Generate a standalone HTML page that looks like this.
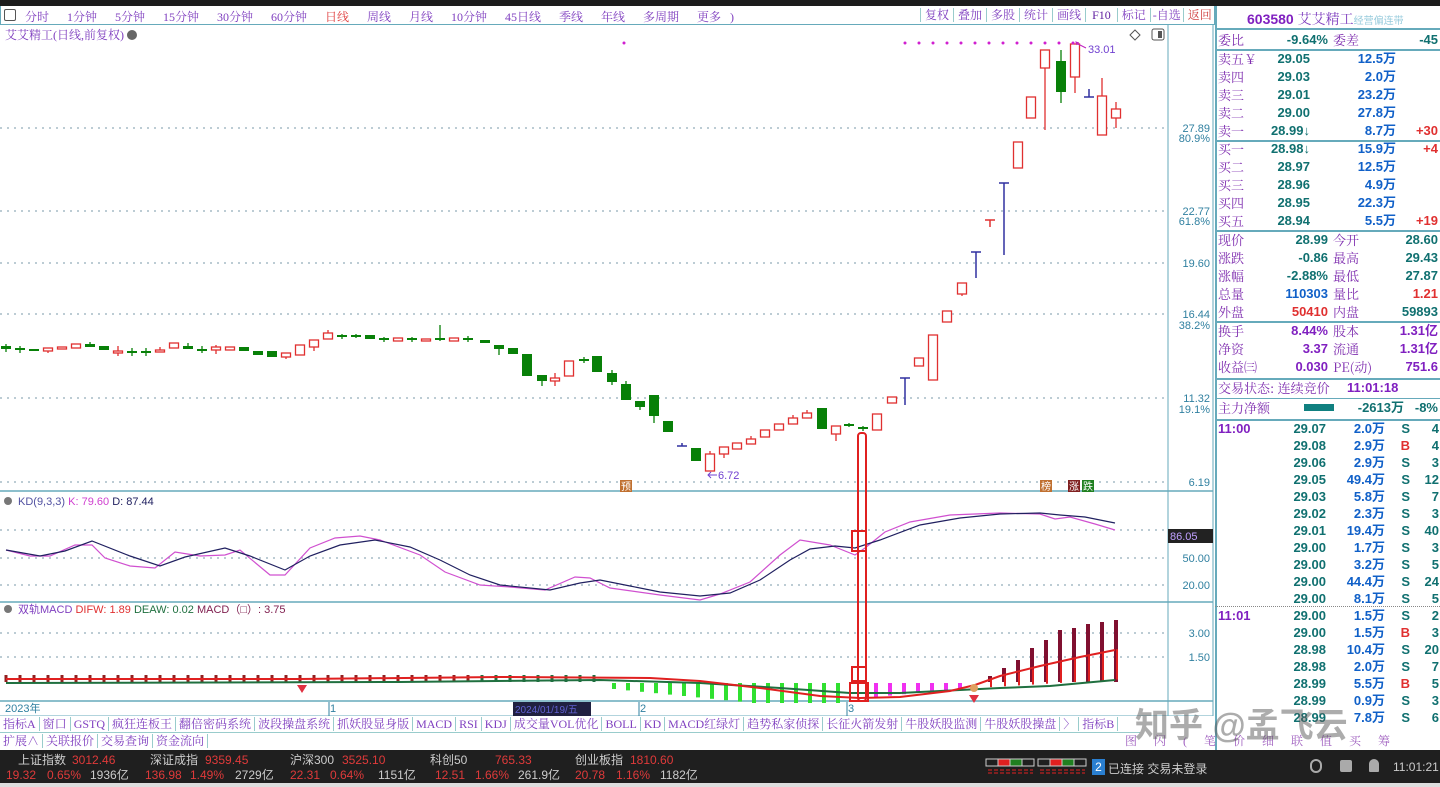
<!DOCTYPE html>
<html><head><meta charset="utf-8">
<style>
*{margin:0;padding:0;box-sizing:border-box}
body{width:1440px;height:787px;overflow:hidden;background:#fff;font-family:"Liberation Sans","Noto Sans CJK SC",sans-serif;position:relative}
.a{position:absolute;white-space:nowrap}
.serif{font-family:"Liberation Serif","Noto Serif CJK SC",serif}
.row span{line-height:18px;top:0}
.lb{color:#8030b0;font-weight:normal;font-family:"Noto Serif CJK SC",serif;font-size:13px}
.tl{color:#107070}
.bl{color:#1060c8}
.rd{color:#e03030}
.pu{color:#8020c0}
</style></head><body>
<div class="a" style="left:0;top:0;width:1440px;height:6px;background:#1c1c1c"></div>
<div class="a" style="left:0;top:6px;width:1215px;height:19px;border:1px solid #6ab;border-top:none;background:#fff"></div>
<div class="a" style="left:4px;top:9px;width:12px;height:12px;border:1px solid #555;border-radius:2px"></div>
<div class="a serif" style="left:25px;top:8px;font-size:12px;color:#8040c0;word-spacing:6px">分时 &nbsp;1分钟 &nbsp;5分钟 &nbsp;15分钟 &nbsp;30分钟 &nbsp;60分钟 &nbsp;<span style="color:#e04040">日线</span> &nbsp;周线 &nbsp;月线 &nbsp;10分钟 &nbsp;45日线 &nbsp;季线 &nbsp;年线 &nbsp;多周期 &nbsp;更多 )</div>
<div class="a serif" style="left:920px;top:6px;height:19px;font-size:12px;color:#8040c0;line-height:19px">
<span style="border-left:1px solid #9cc;padding:0 4px">复权</span><span style="border-left:1px solid #9cc;padding:0 4px">叠加</span><span style="border-left:1px solid #9cc;padding:0 4px">多股</span><span style="border-left:1px solid #9cc;padding:0 4px">统计</span><span style="border-left:1px solid #9cc;padding:0 4px">画线</span><span style="border-left:1px solid #9cc;padding:0 6px;color:#6020a0">F10</span><span style="border-left:1px solid #9cc;padding:0 4px">标记</span><span style="border-left:1px solid #9cc;padding:0 2px">-自选</span><span style="border-left:1px solid #9cc;padding:0 4px;color:#d04040">返回</span></div>
<div class="a serif" style="left:5px;top:26px;font-size:12px;color:#8040c0">艾艾精工(日线,前复权) <span style="display:inline-block;width:10px;height:10px;border-radius:50%;background:#666;vertical-align:-1px"></span></div>

<svg class="a" style="left:0;top:0" width="1215" height="750">
<line x1="1168" y1="25" x2="1168" y2="716" stroke="#6ab"/>
<line x1="1213" y1="25" x2="1213" y2="716" stroke="#6ab"/>
<line x1="0" y1="491" x2="1213" y2="491" stroke="#6ab" stroke-width="1.5"/>
<line x1="0" y1="602" x2="1213" y2="602" stroke="#6ab" stroke-width="1.5"/>
<line x1="0" y1="701" x2="1213" y2="701" stroke="#6ab" stroke-width="1.5"/>
<line x1="0" y1="716" x2="1213" y2="716" stroke="#6ab"/>
<g stroke="#7a9aa8" stroke-dasharray="2,5" stroke-width="1">
<line x1="0" y1="128" x2="1168" y2="128"/><line x1="0" y1="211" x2="1168" y2="211"/><line x1="0" y1="263" x2="1168" y2="263"/><line x1="0" y1="314" x2="1168" y2="314"/><line x1="0" y1="398" x2="1168" y2="398"/><line x1="0" y1="482" x2="1168" y2="482"/>
<line x1="0" y1="530" x2="1168" y2="530"/><line x1="0" y1="558" x2="1168" y2="558"/><line x1="0" y1="585" x2="1168" y2="585"/>
<line x1="0" y1="633" x2="1168" y2="633"/><line x1="0" y1="657" x2="1168" y2="657"/>
</g>
<g font-size="11" fill="#3080a0" text-anchor="end" font-family="Liberation Sans">
<text x="1210" y="132">27.89</text><text x="1210" y="142">80.9%</text>
<text x="1210" y="215">22.77</text><text x="1210" y="225">61.8%</text>
<text x="1210" y="267">19.60</text>
<text x="1210" y="318">16.44</text><text x="1210" y="329">38.2%</text>
<text x="1210" y="402">11.32</text><text x="1210" y="413">19.1%</text>
<text x="1210" y="486">6.19</text>
<text x="1210" y="562">50.00</text><text x="1210" y="589">20.00</text>
<text x="1210" y="637">3.00</text><text x="1210" y="661">1.50</text>
</g>
<rect x="1168" y="529" width="45" height="14" fill="#222"/>
<text x="1170" y="540" font-size="11" fill="#c0a0ff">86.05</text>
<g id="cd"></g>
<g id="pk"></g>
<polyline fill="none" stroke="#d050d0" stroke-width="1.2" points="6,550 30,556 50,556 75,545 92,545 105,558 130,566 155,568 175,552 200,556 225,555 240,550 270,575 285,575 310,548 335,538 360,536 380,540 420,555 445,572 480,585 510,587 545,590 575,577 590,578 610,588 660,595 700,600 720,594 750,582 780,555 800,540 830,545 855,555 865,548 885,532 910,522 950,515 1000,513 1040,514 1055,519 1070,517 1095,524 1115,530"/>
<polyline fill="none" stroke="#202060" stroke-width="1.2" points="6,550 40,556 65,551 92,541 130,556 160,566 185,557 225,548 250,556 285,570 310,556 340,545 375,540 410,547 440,560 470,575 500,585 550,590 580,583 600,580 630,586 660,592 700,596 730,593 760,580 790,560 810,549 835,546 855,548 880,540 920,525 960,518 1000,514 1040,513 1060,515 1085,517 1115,523"/>
<text x="18" y="505" font-size="11" fill="#5050a0">KD(9,3,3) <tspan fill="#d040d0">K: 79.60</tspan> <tspan fill="#202060">D: 87.44</tspan></text>
<circle cx="8" cy="501" r="4" fill="#777"/>
<circle cx="8" cy="609" r="4" fill="#777"/>
<text x="18" y="613" font-size="11" fill="#8040c0">双轨MACD <tspan fill="#e03030">DIFW: 1.89</tspan> <tspan fill="#207040">DEAW: 0.02</tspan> <tspan fill="#802050">MACD（□）: 3.75</tspan></text>
<g id="mb"></g>
<polyline fill="none" stroke="#207040" stroke-width="2" points="6,683 400,682 600,680 700,683 780,688 850,693 900,693 960,690 1000,688 1050,686 1115,680"/>
<polyline fill="none" stroke="#e02020" stroke-width="2" points="6,679 300,679 500,677 650,678 700,681 760,688 820,696 860,698 900,697 950,691 975,685 1000,676 1040,666 1080,657 1115,650"/>
<rect x="858" y="433" width="8" height="268" rx="3" fill="none" stroke="#e02020" stroke-width="2"/>
<rect x="852" y="531" width="14" height="20" fill="none" stroke="#e02020" stroke-width="2"/>
<rect x="852" y="667" width="14" height="14" fill="none" stroke="#e02020" stroke-width="2"/>
<rect x="850" y="683" width="18" height="18" fill="none" stroke="#e02020" stroke-width="2"/>
<path d="M297 685 h10 l-5 8z" fill="#e03040"/>
<path d="M969 695 h10 l-5 8z" fill="#e03040"/><circle cx="974" cy="688" r="4" fill="#e0a060"/>
<rect x="620" y="480" width="12" height="12" fill="#c07030"/><text x="621" y="490" font-size="10" fill="#fff">预</text>
<rect x="1040" y="480" width="12" height="12" fill="#c07030"/><text x="1041" y="490" font-size="10" fill="#fff">榜</text>
<rect x="1068" y="480" width="12" height="12" fill="#802020"/><text x="1069" y="490" font-size="10" fill="#fff">涨</text>
<rect x="1082" y="480" width="12" height="12" fill="#208020"/><text x="1083" y="490" font-size="10" fill="#fff">跌</text>
<text x="718" y="479" font-size="11" fill="#7040d0">6.72</text><path d="M717 475 h-9 m3 -3 l-3 3 l3 3" stroke="#7040d0" fill="none"/>
<text x="1088" y="53" font-size="11" fill="#7040d0">33.01</text><path d="M1086 48 l-10 -5 m3 0 l-3 -1 l1 3" stroke="#c020c0" fill="none"/>
<path d="M1130 35 l5 -5 l5 5 l-5 5z" fill="none" stroke="#555"/>
<rect x="1152" y="29" width="12" height="11" rx="2" fill="none" stroke="#555"/><rect x="1158" y="31" width="4" height="7" fill="#555"/>
<g font-size="11" fill="#3080a0"><text x="5" y="712">2023年</text><text x="330" y="712">1</text><text x="640" y="712">2</text><text x="848" y="712">3</text></g>
<g stroke="#3080a0"><line x1="329" y1="702" x2="329" y2="716"/><line x1="639" y1="702" x2="639" y2="716"/><line x1="847" y1="702" x2="847" y2="716"/></g>
<rect x="513" y="702" width="78" height="14" fill="#202040"/><text x="515" y="713" font-size="10" fill="#6060d0">2024/01/19/五</text>
</svg>

<div class="a" style="left:0;top:716px;width:1215px;height:34px;background:#fff"></div>
<div class="a serif" style="left:0;top:716px;height:17px;font-size:12px;color:#8040c0;line-height:17px;border-bottom:1px solid #9cc;width:1140px">
<span style="padding:0 3px;border-right:1px solid #9cc">指标A</span><span style="padding:0 3px;border-right:1px solid #9cc">窗口</span><span style="padding:0 3px;border-right:1px solid #9cc">GSTQ</span><span style="padding:0 3px;border-right:1px solid #9cc">疯狂连板王</span><span style="padding:0 3px;border-right:1px solid #9cc">翻倍密码系统</span><span style="padding:0 3px;border-right:1px solid #9cc">波段操盘系统</span><span style="padding:0 3px;border-right:1px solid #9cc">抓妖股显身版</span><span style="padding:0 3px;border-right:1px solid #9cc">MACD</span><span style="padding:0 3px;border-right:1px solid #9cc">RSI</span><span style="padding:0 3px;border-right:1px solid #9cc">KDJ</span><span style="padding:0 3px;border-right:1px solid #9cc">成交量VOL优化</span><span style="padding:0 3px;border-right:1px solid #9cc">BOLL</span><span style="padding:0 3px;border-right:1px solid #9cc">KD</span><span style="padding:0 3px;border-right:1px solid #9cc">MACD红绿灯</span><span style="padding:0 3px;border-right:1px solid #9cc">趋势私家侦探</span><span style="padding:0 3px;border-right:1px solid #9cc">长征火箭发射</span><span style="padding:0 3px;border-right:1px solid #9cc">牛股妖股监测</span><span style="padding:0 3px;border-right:1px solid #9cc">牛股妖股操盘</span><span style="padding:0 3px;border-right:1px solid #9cc">〉</span><span style="padding:0 3px;border-right:1px solid #9cc">指标B</span></div>
<div class="a serif" style="left:0;top:733px;height:17px;font-size:12px;color:#8040c0;line-height:17px">
<span style="padding:0 3px;border-right:1px solid #9cc">扩展∧</span><span style="padding:0 3px;border-right:1px solid #9cc">关联报价</span><span style="padding:0 3px;border-right:1px solid #9cc">交易查询</span><span style="padding:0 3px;border-right:1px solid #9cc">资金流向</span></div>

<div class="a" style="left:1215px;top:6px;width:225px;height:744px;border-left:2px solid #6ab;background:#fff"></div>
<div class="a" style="left:1247px;top:9px;font-size:14px;font-weight:bold;color:#8020c0">603580 <span style="font-weight:normal;font-family:'Noto Serif CJK SC',serif;color:#8040c0">艾艾精工</span><span style="font-size:10px;color:#9cd;font-weight:normal">经营偏连带</span></div>
<div class="a" style="left:1215px;top:28px;width:225px;border-top:2px solid #6ab"></div>
<div class="a" style="left:1215px;top:49px;width:225px;border-top:2px solid #6ab"></div>
<div class="a" style="left:1215px;top:140px;width:225px;border-top:2px solid #6ab"></div>
<div class="a" style="left:1215px;top:230px;width:225px;border-top:2px solid #6ab"></div>
<div class="a" style="left:1215px;top:321px;width:225px;border-top:2px solid #6ab"></div>
<div class="a" style="left:1215px;top:378px;width:225px;border-top:2px solid #6ab"></div>
<div class="a" style="left:1215px;top:398px;width:225px;border-top:1px solid #6ab"></div>
<div class="a" style="left:1215px;top:419px;width:225px;border-top:2px solid #6ab"></div>
<div class="a" style="left:1215px;top:606px;width:225px;border-top:1px dotted #888"></div>
<div class="a" style="left:1304px;top:404px;width:30px;height:7px;background:#108080"></div>

<div class="a" style="left:0;top:750px;width:1440px;height:37px;background:#1f1f1f"></div>
<div class="a" style="left:0;top:783px;width:1440px;height:4px;background:#ddd"></div>
<div class="a" style="top:753px;left:0;width:800px;font-size:12px;color:#ccc;line-height:15px">
<span class="a" style="left:18px">上证指数</span><span class="a" style="left:72px;color:#e03a3a">3012.46</span>
<span class="a" style="left:150px">深证成指</span><span class="a" style="left:205px;color:#e03a3a">9359.45</span>
<span class="a" style="left:290px">沪深300</span><span class="a" style="left:342px;color:#e03a3a">3525.10</span>
<span class="a" style="left:430px">科创50</span><span class="a" style="left:495px;color:#e03a3a">765.33</span>
<span class="a" style="left:575px">创业板指</span><span class="a" style="left:630px;color:#e03a3a">1810.60</span>
</div>
<div class="a" style="top:768px;left:0;width:800px;font-size:12px;color:#ccc;line-height:15px">
<span class="a" style="left:6px;color:#e03a3a">19.32</span><span class="a" style="left:47px;color:#e03a3a">0.65%</span><span class="a" style="left:90px">1936亿</span>
<span class="a" style="left:145px;color:#e03a3a">136.98</span><span class="a" style="left:190px;color:#e03a3a">1.49%</span><span class="a" style="left:235px">2729亿</span>
<span class="a" style="left:290px;color:#e03a3a">22.31</span><span class="a" style="left:330px;color:#e03a3a">0.64%</span><span class="a" style="left:378px">1151亿</span>
<span class="a" style="left:435px;color:#e03a3a">12.51</span><span class="a" style="left:475px;color:#e03a3a">1.66%</span><span class="a" style="left:518px">261.9亿</span>
<span class="a" style="left:575px;color:#e03a3a">20.78</span><span class="a" style="left:616px;color:#e03a3a">1.16%</span><span class="a" style="left:660px">1182亿</span>
</div>
<svg class="a" style="left:985px;top:758px" width="105" height="20">
<g fill="none" stroke="#ccc"><rect x="1" y="1" width="12" height="7"/><rect x="13" y="1" width="12" height="7" fill="#e02020"/><rect x="25" y="1" width="12" height="7" fill="#208020"/><rect x="37" y="1" width="12" height="7"/>
<rect x="53" y="1" width="12" height="7"/><rect x="65" y="1" width="12" height="7" fill="#e02020"/><rect x="77" y="1" width="12" height="7" fill="#208020"/><rect x="89" y="1" width="12" height="7"/></g>
<g stroke="#e02020" stroke-dasharray="4,2"><line x1="3" y1="12" x2="48" y2="12"/><line x1="3" y1="15" x2="48" y2="15"/><line x1="55" y1="12" x2="100" y2="12"/><line x1="55" y1="15" x2="100" y2="15"/></g>
</svg>
<div class="a" style="left:1092px;top:759px;width:13px;height:16px;background:#2a7fd0;color:#fff;font-size:12px;text-align:center;line-height:16px">2</div>
<div class="a" style="left:1108px;top:760px;font-size:12px;color:#ccc">已连接 交易未登录</div>
<div class="a" style="left:1310px;top:759px;width:12px;height:14px;border:2px solid #aaa;border-radius:6px"></div>
<div class="a" style="left:1340px;top:760px;width:12px;height:12px;background:#aaa;border-radius:2px"></div>
<div class="a" style="left:1369px;top:759px;width:10px;height:13px;background:#aaa;border-radius:5px 5px 1px 1px"></div>
<div class="a" style="left:1393px;top:760px;font-size:12px;color:#ccc">11:01:21</div>

<script>
(function(){
var NS="http://www.w3.org/2000/svg";
function el(p,t,a){var e=document.createElementNS(NS,t);for(var k in a)e.setAttribute(k,a[k]);p.appendChild(e);return e;}
var cd=document.getElementById("cd");
var C=[
[6,'d',346,349,344,352],[20,'c',349,349,346,353],[34,'d',349,351],[48,'u',348,351,,353],[62,'u',347,349],[76,'u',344,348],[90,'d',344,347,342],[104,'d',346,350],[118,'u',351,353,346,356],[132,'c',352,352,348,356],[146,'c',352,352,348,356],[160,'u',350,352,347],[174,'u',343,348],[188,'d',346,349,343],[202,'c',350,350,346,353],[216,'u',347,350,345,354],[230,'u',347,350],[244,'d',347,351],[258,'d',351,355],[272,'d',351,357],[286,'u',353,357,,359],[300,'u',345,355],[314,'u',340,347,,351],[328,'u',333,339,330],[342,'c',336,336,334,339],[356,'c',336,336,334,338],[370,'d',335,339],[384,'c',339,339,337,342],[398,'u',338,341],[412,'c',339,339,337,342],[426,'u',339,341],[440,'c',339,339,325,341],[454,'u',338,341],[468,'c',339,339,336,342],
[485,'d',340,343],[499,'d',345,349,,355],[513,'d',348,354],[527,'d',354,376],[542,'d',375,381,,386],[555,'u',378,381,373,386],[569,'u',361,376],[584,'c',360,360,357,363],[597,'d',356,372],[612,'d',373,382,370,385],[626,'d',384,400,381],[640,'d',401,407,,410],[654,'d',395,416,,423],[668,'d',421,432],[682,'b',446,446,443,446],[696,'d',448,461],[710,'u',454,471,451],[724,'u',447,454,,458],[737,'u',443,449],[751,'u',439,444,436],[765,'u',430,437],[779,'u',424,430],[793,'u',418,424,415],[807,'u',413,418,410],[822,'d',408,429],[836,'u',426,434,,441],[849,'c',425,425,423,427],[863,'c',428,428,426,431],[877,'u',414,430],[892,'u',397,403],[905,'b',378,378,378,405],[919,'u',358,366],[933,'u',335,380],[947,'u',311,322],[962,'u',283,294,,296],[976,'b',252,252,252,278],[990,'r',220,220,220,227],[1004,'b',183,183,183,255],[1018,'u',142,168],[1031,'u',97,118],[1045,'u',50,68,,130],[1061,'d',61,92,50,103],[1075,'u',44,77,,93],[1089,'b',97,97,89,97],[1102,'u',96,135,78],[1116,'u',109,118,102,128]];
C.forEach(function(c){var x=c[0],t=c[1],a=c[2],b=c[3],h=c[4]==null?a:c[4],l=c[5]==null?b:c[5];
 if(t=='b'||t=='r'){var col=t=='b'?'#3030a0':'#e03030';el(cd,'line',{x1:x,y1:h,x2:x,y2:l,stroke:col,'stroke-width':1.5});el(cd,'line',{x1:x-5,y1:a,x2:x+5,y2:a,stroke:col,'stroke-width':1.5});return;}
 var col=t=='u'?'#e03030':'#088008';
 if(h<a)el(cd,'line',{x1:x,y1:h,x2:x,y2:a,stroke:col,'stroke-width':1.3});
 if(l>b)el(cd,'line',{x1:x,y1:b,x2:x,y2:l,stroke:col,'stroke-width':1.3});
 if(t=='c'){el(cd,'line',{x1:x-5,y1:a,x2:x+5,y2:a,stroke:col,'stroke-width':2});return;}
 var hh=Math.max(b-a,2);
 if(t=='d')el(cd,'rect',{x:x-5,y:a,width:10,height:hh,fill:col});
 else el(cd,'rect',{x:x-4.5,y:a,width:9,height:hh,fill:'#fff',stroke:col,'stroke-width':1.3});
});
var pk=document.getElementById("pk");
el(pk,'circle',{cx:624,cy:43,r:1.5,fill:'#d020d0'});
for(var x=905;x<=1085;x+=14)el(pk,'circle',{cx:x,cy:43,r:1.5,fill:'#d020d0'});
var mb=document.getElementById("mb");
for(var x=6;x<=600;x+=14){el(mb,'rect',{x:x-1.5,y:675,width:3,height:7,fill:(x<480?'#902020':'#207040')});}
for(var x=614;x<=850;x+=14){var d=Math.min(6+(x-614)/10,20);el(mb,'rect',{x:x-2,y:683,width:4,height:d,fill:'#30e030'});}
for(var x=876;x<=960;x+=14){el(mb,'rect',{x:x-2,y:683,width:4,height:14-(x-876)/10,fill:'#f030f0'});}
var tops=[676,668,660,648,640,630,628,624,622,620];var i=0;
for(var x=990;x<=1116;x+=14){var tp=tops[i];el(mb,'rect',{x:x-2,y:tp,width:4,height:682-tp,fill:'#801030'});
var rt=683-(x-975)*0.24;el(mb,'line',{x1:x+1,y1:rt,x2:x+1,y2:688-(x-975)*0.06,stroke:'#e02020','stroke-width':2});i++;}
function row(y,cells){var d=document.createElement('div');d.className='a row';d.style.cssText='left:1217px;top:'+y+'px;width:223px;height:18px;font-size:13px;font-weight:bold';
cells.forEach(function(c){var s=document.createElement('span');s.className='a '+(c[2]||'');s.textContent=c[0];if(c[1]<0){s.style.right=(-c[1])+'px'}else s.style.left=c[1]+'px';d.appendChild(s);});document.body.appendChild(d);}
row(31,[['委比',1,'lb'],['-9.64%',-112,'tl'],['委差',116,'lb'],['-45',-2,'tl']]);
var S=[['卖五￥','29.05','12.5万',''],['卖四','29.03','2.0万',''],['卖三','29.01','23.2万',''],['卖二','29.00','27.8万',''],['卖一','28.99↓','8.7万','+30']];
S.forEach(function(s,i){row(50+i*18,[[s[0],1,'lb'],[s[1],-130,'tl'],[s[2],-44,'bl'],[s[3],-2,'rd']]);});
var B=[['买一','28.98↓','15.9万','+4'],['买二','28.97','12.5万',''],['买三','28.96','4.9万',''],['买四','28.95','22.3万',''],['买五','28.94','5.5万','+19']];
B.forEach(function(s,i){row(140+i*18,[[s[0],1,'lb'],[s[1],-130,'tl'],[s[2],-44,'bl'],[s[3],-2,'rd']]);});
var Q=[['现价','28.99','tl','今开','28.60','tl'],['涨跌','-0.86','tl','最高','29.43','tl'],['涨幅','-2.88%','tl','最低','27.87','tl'],['总量','110303','bl','量比','1.21','rd'],['外盘','50410','rd','内盘','59893','tl']];
Q.forEach(function(s,i){row(231+i*18,[[s[0],1,'lb'],[s[1],-112,s[2]],[s[3],116,'lb'],[s[4],-2,s[5]]]);});
var P=[['换手','8.44%','股本','1.31亿'],['净资','3.37','流通','1.31亿'],['收益㈢','0.030','PE(动)','751.6']];
P.forEach(function(s,i){row(322+i*18,[[s[0],1,'lb'],[s[1],-112,'pu'],[s[2],116,'lb'],[s[3],-2,'pu']]);});
row(379,[['交易状态: 连续竞价',1,'lb'],['11:01:18',130,'pu']]);
row(399,[['主力净额',1,'lb'],['-2613万',-36,'tl'],['-8%',-2,'tl']]);
var T=[['11:00','29.07','2.0万','S','4'],['','29.08','2.9万','B','4'],['','29.06','2.9万','S','3'],['','29.05','49.4万','S','12'],['','29.03','5.8万','S','7'],['','29.02','2.3万','S','3'],['','29.01','19.4万','S','40'],['','29.00','1.7万','S','3'],['','29.00','3.2万','S','5'],['','29.00','44.4万','S','24'],['','29.00','8.1万','S','5'],
['11:01','29.00','1.5万','S','2'],['','29.00','1.5万','B','3'],['','28.98','10.4万','S','20'],['','28.98','2.0万','S','7'],['','28.99','5.5万','B','5'],['','28.99','0.9万','S','3'],['','28.99','7.8万','S','6']];
T.forEach(function(s,i){row(420+i*17,[[s[0],1,'pu'],[s[1],-114,'tl'],[s[2],-55,'bl'],[s[3],-30,s[3]=='B'?'rd':'tl'],[s[4],-1,'tl']]);});
})();
</script>
<div class="a" style="left:1135px;top:698px;font-size:34px;color:rgba(90,90,90,0.5);font-weight:bold;z-index:5">知乎 @孟飞云</div>
<div class="a serif" style="left:1125px;top:733px;font-size:12px;color:#a060c0;line-height:17px;word-spacing:14px;z-index:4">图 闪 ( 笔 价 细 联 值 买 筹</div>
</body></html>
